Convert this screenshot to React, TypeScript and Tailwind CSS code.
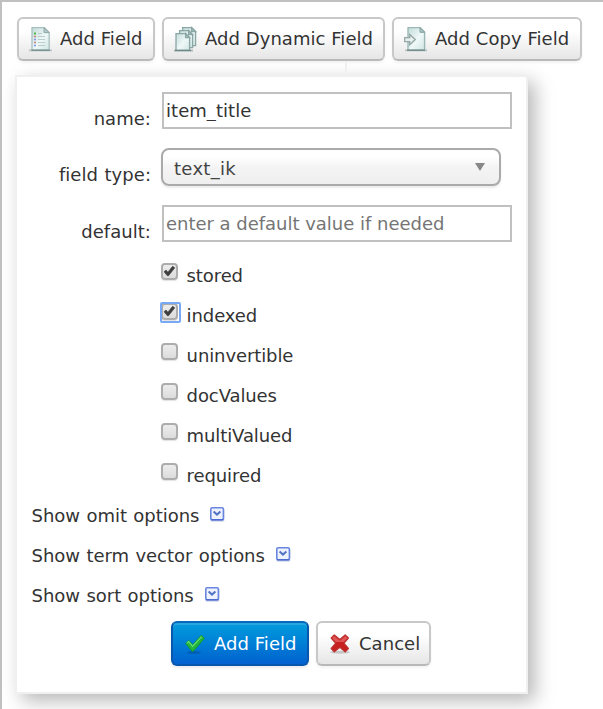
import React from "react";

function Doc({ kind }: { kind: "list" | "stack" | "copy" }) {
  return (
    <svg width="24" height="26" viewBox="0 0 24 26" className="shrink-0">
      <defs>
        <linearGradient id={"paper-" + kind} x1="0" y1="0" x2="1" y2="1">
          <stop offset="0" stopColor="#c3dcda" />
          <stop offset=".55" stopColor="#eef8f7" />
          <stop offset="1" stopColor="#cfe5e3" />
        </linearGradient>
      </defs>
      {kind === "list" && (
        <g>
          <path d="M0 24.4h23" stroke="#78908f" strokeOpacity=".4" strokeWidth="2" />
          <path d="M3 1.6h12.2l5 5v17.6H3z" fill="url(#paper-list)" stroke="#a9c0c0" strokeWidth="1.3" />
          <path d="M2.4 24.2h18.4" stroke="#728b8b" strokeWidth="1.3" />
          <path d="M15 1.6v5h5.2z" fill="#b5cccb" stroke="#8ba5a5" />
          <path d="M9 7.5h4M9 10.5h7M9 13.5h7M9 16.5h7M9 19.5h7" stroke="#b8cccb" />
          <path d="M5 7.5h2" stroke="#55bb45" strokeWidth="2" />
          <path d="M5 10.5h2M5 16.5h2" stroke="#c4817f" strokeWidth="1.6" />
          <path d="M5 13.5h2M5 19.5h2" stroke="#8794ee" strokeWidth="1.6" />
        </g>
      )}
      {kind === "stack" && (
        <g fill="url(#paper-stack)" stroke="#8aa6a5" strokeWidth="1.3">
          <path d="M0 24.6h19" stroke="#6f8989" strokeOpacity=".5" strokeWidth="2" />
          <path d="M8.6 1.6h9l4 4v14h-13z" />
          <path d="M17.6 1.6v4h4z" fill="#a2bdbc" />
          <path d="M5.6 4.6h9l4 4v13h-13z" />
          <path d="M14.6 4.6v4h4z" fill="#a2bdbc" />
          <path d="M2 7.6h9.6l4 4v12.8H2z" />
          <path d="M11.6 7.6v4h4z" fill="#a2bdbc" />
          <path d="M1 24.4h16" stroke="#6f8989" strokeWidth="1.3" />
        </g>
      )}
      {kind === "copy" && (
        <g>
          <path d="M1 24.4h22" stroke="#78908f" strokeOpacity=".4" strokeWidth="2" />
          <path d="M4 1.6h12.1l4.5 4.5v18H4z" fill="url(#paper-copy)" stroke="#9bb8b7" strokeWidth="1.4" />
          <path d="M16 1.6v4.7h4.6z" fill="#abc5c4" stroke="#86a2a1" />
          <path d="M3 24.2h18" stroke="#718a8a" strokeWidth="1.4" />
          <path d="M.7 11.6h5V8.4l5.6 5.2-5.6 5.2v-3.2h-5z" fill="#e6efee" stroke="#94a6a5" strokeWidth="1.3" />
        </g>
      )}
    </svg>
  );
}

const btn =
  "flex items-center rounded-[6px] border-2 border-[#c8c8c8] border-b-[#b9b9b9] bg-linear-to-b from-white from-30% to-[#e6e6e6] shadow-[0_2px_3px_rgba(0,0,0,0.05)]";

function Check({ on, focus }: { on?: boolean; focus?: boolean }) {
  return (
    <span className="relative flex h-[17px] w-[17px] shrink-0 rounded-[4px] border-2 border-[#adadad] bg-linear-to-b from-[#ededed] to-[#dcdcdc] shadow-[0_1px_1px_rgba(0,0,0,0.12)]">
      {on && (
        <svg width="13" height="13" viewBox="0 0 13 13" className="shrink-0">
          <path d="M1 6.8 3 5 4.9 7.2 9.6 1.2 11.8 2.8 5.5 10.8H4.4z" fill="#3e3e3e" stroke="#3e3e3e" strokeWidth=".6" />
        </svg>
      )}
      {focus && <span className="absolute -top-[3px] -left-[3px] h-[21px] w-[21px] rounded-[2px] border-2 border-[#78a9f5]" />}
    </span>
  );
}

const checks = [
  { t: "stored", on: true },
  { t: "indexed", on: true, focus: true },
  { t: "uninvertible" },
  { t: "docValues" },
  { t: "multiValued" },
  { t: "required" },
];

function Toggle() {
  return (
    <svg width="16" height="16" viewBox="0 0 16 16" className="mb-[3px] shrink-0">
      <rect x="1" y="2" width="14.6" height="14" rx="2" fill="#dfe3ee" />
      <rect x="1.8" y="1.8" width="12.6" height="12" rx="1.5" fill="#eef2ff" stroke="#6885df" strokeWidth="1.6" />
      <path d="M2 13.8h12.4" stroke="#4b68d0" strokeWidth="1.4" />
      <path d="M4.6 5.6 8 8.6 11.4 5.6" fill="none" stroke="#5272c4" strokeWidth="2" />
    </svg>
  );
}

export default function App() {
  return (
    <div className="h-[709px] w-[603px] overflow-hidden border-t-2 border-l-2 border-[#c0c0c0] bg-white pl-[13px] font-['DejaVu_Sans',Verdana,sans-serif] text-[18px] leading-[22px] tracking-[0.05px] text-[#333] [word-spacing:0.7px]">
      <div className="relative z-10 flex h-[59px] items-start gap-[7px] pt-[15px] pl-[2px] whitespace-nowrap">
        <button className={btn + " h-[44px] w-[138px] pl-[10px] gap-[7px]"}>
          <Doc kind="list" />Add Field
        </button>
        <button className={btn + " h-[44px] w-[223px] pl-[10px] gap-[7px]"}>
          <Doc kind="stack" />Add Dynamic Field
        </button>
        <button className={btn + " h-[44px] w-[190px] pl-[10px] gap-[7px]"}>
          <Doc kind="copy" />Add Copy Field
        </button>
      </div>
      <div className="h-[14px] pl-[330px]">
        <div className="relative z-10 h-[14px] w-[2px] bg-[#f0f0f0]" />
      </div>
      <div className="h-[619px] w-[513px] border-2 border-[#f0f0f0] bg-white pt-[15px] shadow-[7px_7px_18px_#b8b8b8]">
        <div className="flex h-[56px]">
          <label className="w-[134px] pt-[16px] text-right">name:</label>
          <input defaultValue="item_title" className="ml-[11px] h-[37px] w-[350px] border-2 border-[#c0c0c0] px-[2px]" />
        </div>
        <div className="flex h-[57px]">
          <label className="w-[134px] pt-[16px] text-right">field type:</label>
          <div className="ml-[10px] flex h-[38px] w-[340px] items-center justify-between rounded-[8px] border-2 border-[#aaa] bg-linear-to-b from-white from-20% via-[#f4f4f4] via-50% to-[#efefef] pr-[14px] pl-[11px] text-[#444] shadow-[0_2px_2px_rgba(0,0,0,0.08)]">
            <span className="pt-[3px] tracking-[0.3px]">text_ik</span>
            <svg width="10" height="8" viewBox="0 0 10 8"><path d="M0 0h10L5 8z" fill="#888" /></svg>
          </div>
        </div>
        <div className="flex h-[50px]">
          <label className="w-[134px] pt-[16px] text-right">default:</label>
          <input placeholder="enter a default value if needed" className="ml-[11px] h-[37px] w-[350px] border-2 border-[#c0c0c0] px-[2px] tracking-[-0.02px] placeholder:text-[#757575]" />
        </div>
        {checks.map((c) => (
          <div key={c.t} className="flex h-[40px] gap-[8.6px] pt-[8px] pl-[144px] tracking-[-0.1px]">
            <Check on={c.on} focus={c.focus} />
            <span className="pt-[2px]">{c.t}</span>
          </div>
        ))}
        {["Show omit options", "Show term vector options", "Show sort options"].map((t) => (
          <div key={t} className="flex h-[40px] items-center gap-[10px] pl-[14.6px] tracking-[-0.03px]">
            <span className="pt-[2px]">{t}</span>
            <Toggle />
          </div>
        ))}
        <div className="flex gap-[7px] pt-[6px] pl-[154px] whitespace-nowrap">
          <button className="flex h-[45px] w-[138px] items-center gap-[8px] rounded-[6px] border-2 border-[#0757ae] border-t-[#0869bc] bg-linear-to-b from-[#079bdc] to-[#0361cf] pl-[11px] text-white shadow-[0_2px_3px_rgba(0,0,0,0.08),inset_0_2px_0_rgba(255,255,255,0.13)]">
            <svg width="22" height="24" viewBox="0 0 22 24" className="shrink-0">
              <ellipse cx="10" cy="20.5" rx="7" ry="1.5" fill="#064a91" fillOpacity=".5" />
              <path d="m1.8 11.5 3-3 3.9 4.4L17.3 3.2l3 3.2L9.2 19.2H8z" fill="#22b63c" stroke="#139b30" />
              <path d="m3 11 1.6-1.3 4 4.7L17.6 4.6" fill="none" stroke="#6bdd72" strokeWidth="1.2" />
            </svg>
            Add Field
          </button>
          <button className={btn + " h-[45px] w-[115px] pl-[11px] gap-[8px]"}>
            <svg width="22" height="24" viewBox="0 0 22 24" className="shrink-0">
              <ellipse cx="11" cy="20.2" rx="10" ry="1.5" fill="#aaa" fillOpacity=".6" />
              <path d="m2.2 6 3.1-3 5.5 4.6L16.2 3l3.2 3-4.6 5.3 4.6 5.2-3.2 3.3-5.4-4.6-5.5 4.6-3.1-3.3 4.6-5.2z" fill="#c71e1e" stroke="#bd3030" strokeWidth="1.3" strokeLinejoin="round" />
              <path d="m3 6 2.3-2 5.5 4.7L16.2 4l2.3 2-3.7 4H6.8z" fill="#de5353" />
            </svg>
            Cancel
          </button>
        </div>
      </div>
    </div>
  );
}
